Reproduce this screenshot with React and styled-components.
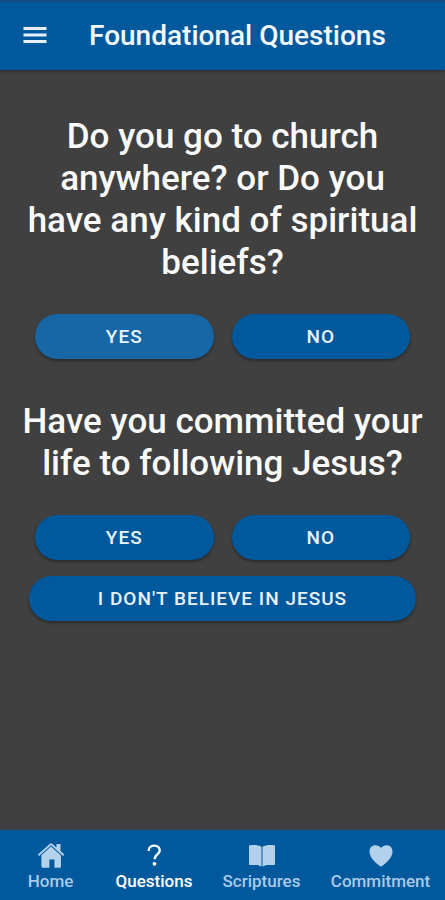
import styled, { createGlobalStyle } from "styled-components";

const GlobalStyle = createGlobalStyle`
  * {
    box-sizing: border-box;
  }
  body {
    margin: 0;
    background: #404040;
    font-family: Roboto, "Liberation Sans", sans-serif;
  }
`;

const Page = styled.div`
  display: flex;
  flex-direction: column;
  min-height: 100vh;
  color: #fff;
`;

const Header = styled.header`
  display: flex;
  align-items: center;
  gap: 39px;
  height: 70px;
  padding: 0 20px;
  background: #00589d;
  border-top: 2px solid #164c82;
  box-shadow: 0 1px 3px rgba(0, 0, 0, 0.4);
`;

const MenuButton = styled.button`
  display: flex;
  padding: 0;
  border: 0;
  background: none;
  color: #e6f1fb;
  cursor: pointer;
`;

const Title = styled.h1`
  margin: 0;
  font-size: 28px;
  line-height: 32px;
  font-weight: 500;
  color: #f2f8fd;
`;

const Content = styled.main`
  flex: 1;
  padding: 46px 21px 24px;
`;

const Question = styled.section`
  margin-bottom: 42px;
`;

const QuestionText = styled.h2`
  margin: 0 0 30px;
  font-size: 35px;
  line-height: 42px;
  font-weight: 500;
  text-align: center;
  color: #fafafa;
`;

const Answers = styled.div`
  display: grid;
  grid-template-columns: 1fr 1fr;
  gap: 18px;
  padding: 0 14px;
`;

const WideAnswer = styled.div`
  display: grid;
  margin-top: 16px;
  padding: 0 8px;
`;

const AnswerButton = styled.button`
  height: 45px;
  padding: 0 16px;
  border: 0;
  border-radius: 23px;
  background: ${(props) => (props.$active ? "#1766a6" : "#00589d")};
  box-shadow: 0 2px 3px rgba(0, 0, 0, 0.35);
  color: #e9f3fc;
  font-family: inherit;
  font-size: 19px;
  font-weight: 500;
  letter-spacing: 1px;
  text-transform: uppercase;
  cursor: pointer;
`;

const TabBar = styled.nav`
  display: grid;
  grid-template-columns: 101fr 106fr 109fr 129fr;
  height: 70px;
  background: #00589d;
`;

const Tab = styled.a`
  display: flex;
  flex-direction: column;
  align-items: center;
  gap: 1px;
  padding-top: 12px;
  color: ${(props) => (props.$active ? "#fff" : "#a9cbe9")};
  font-size: 17px;
  line-height: 20px;
  font-weight: 500;
  text-decoration: none;

  svg {
    color: ${(props) => (props.$active ? "#fff" : "#b3d1ea")};
  }
`;

const MenuIcon = () => (
  <svg width="30" height="30" viewBox="0 0 30 30" fill="currentColor" aria-hidden="true">
    <path d="M3.5 6h23v3h-23zM3.5 12.500h23v3h-23zM3.5 19h23v3h-23z" />
  </svg>
);

const TabIcon = ({ children }) => (
  <svg width="28" height="28" viewBox="0 0 28 28" fill="currentColor" aria-hidden="true">
    {children}
  </svg>
);

const HomeIcon = () => (
  <TabIcon>
    <path d="M14 4.600 24 13.400v10.800a1.600 1.600 0 0 1-1.600 1.600h-5v-8.300h-5v8.300H6a1.600 1.600 0 0 1-1.600-1.600V13.200z" />
    <path d="M13 1.700a1.700 1.700 0 0 1 2.200 0l4.300 3.800V2h4v6.900l3.900 3.500-1.300 1.500L14.100 3.300 2.200 13.900 .8 12.400z" />
  </TabIcon>
);

const QuestionIcon = () => (
  <TabIcon>
    <path
      d="M8.600 9c0-3.300 2.300-5.400 5.600-5.400 3.300 0 5.500 1.900 5.500 4.800 0 3.900-5.200 4.300-5.200 8.900"
      fill="none"
      stroke="currentColor"
      strokeWidth="2.400"
    />
    <circle cx="14.500" cy="21.800" r="1.900" />
  </TabIcon>
);

const BookIcon = () => (
  <TabIcon>
    <path d="M1 3.500c5-.9 9.200-.5 12.500 1.300v20c-1.600-1.300-3.300-1.800-5.500-1.800H1.700a.7.7 0 0 1-.7-.7z" />
    <path d="M27 3.500c-5-.9-9.200-.5-12.500 1.300v20c1.600-1.300 3.300-1.800 5.500-1.800h6.300a.7.7 0 0 0 .7-.7z" />
  </TabIcon>
);

const HeartIcon = () => (
  <TabIcon>
    <path d="M14 24.500c-.6 0-1.200-.3-1.700-.7C7 19.500 2.500 14.800 2.500 9.600 2.500 5.700 5 3.300 8.200 3.300c2.400 0 4.500 1.100 5.800 2.700 1.300-1.600 3.400-2.700 5.800-2.700 3.200 0 5.700 2.400 5.700 6.300 0 5.200-4.500 9.900-9.800 14.200-.5.4-1.100.7-1.700.7z" />
  </TabIcon>
);

const tabs = [
  { label: "Home", href: "#home", Icon: HomeIcon },
  { label: "Questions", href: "#questions", Icon: QuestionIcon, active: true },
  { label: "Scriptures", href: "#scriptures", Icon: BookIcon },
  { label: "Commitment", href: "#commitment", Icon: HeartIcon },
];

export default function App() {
  return (
    <Page>
      <GlobalStyle />
      <Header>
        <MenuButton type="button" aria-label="Menu">
          <MenuIcon />
        </MenuButton>
        <Title>Foundational Questions</Title>
      </Header>
      <Content>
        <Question>
          <QuestionText>
            Do you go to church anywhere? or Do you have any kind of spiritual beliefs?
          </QuestionText>
          <Answers>
            <AnswerButton type="button" $active>Yes</AnswerButton>
            <AnswerButton type="button">No</AnswerButton>
          </Answers>
        </Question>
        <Question>
          <QuestionText>Have you committed your life to following Jesus?</QuestionText>
          <Answers>
            <AnswerButton type="button">Yes</AnswerButton>
            <AnswerButton type="button">No</AnswerButton>
          </Answers>
          <WideAnswer>
            <AnswerButton type="button">I don't believe in Jesus</AnswerButton>
          </WideAnswer>
        </Question>
      </Content>
      <TabBar>
        {tabs.map(({ label, href, Icon, active }) => (
          <Tab key={label} href={href} $active={active}>
            <Icon />
            {label}
          </Tab>
        ))}
      </TabBar>
    </Page>
  );
}
